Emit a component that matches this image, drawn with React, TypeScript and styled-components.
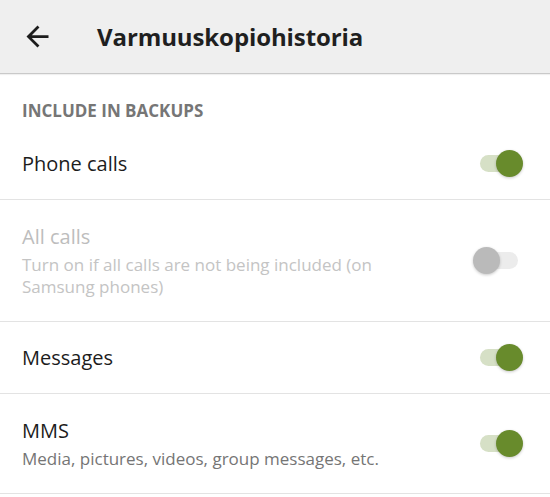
import React, { useState } from 'react';
import styled, { createGlobalStyle } from 'styled-components';

const GlobalStyle = createGlobalStyle`
  html, body {
    margin: 0;
    padding: 0;
    background: #ffffff;
  }
  body {
    font-family: 'Open Sans', 'Noto Sans', sans-serif;
    -webkit-font-smoothing: antialiased;
  }
`;

type Item = {
  id: string;
  title: string;
  subtitle?: string;
  disabled?: boolean;
  on: boolean;
};

const ITEMS: Item[] = [
  { id: 'calls', title: 'Phone calls', on: true },
  {
    id: 'allcalls',
    title: 'All calls',
    subtitle: 'Turn on if all calls are not being included (on Samsung phones)',
    disabled: true,
    on: false,
  },
  { id: 'messages', title: 'Messages', on: true },
  {
    id: 'mms',
    title: 'MMS',
    subtitle: 'Media, pictures, videos, group messages, etc.',
    on: true,
  },
];

const BackIcon = () => (
  <svg width="33" height="33" viewBox="0 0 24 24" fill="#1c1c1c">
    <path d="M20 11H7.83l5.59-5.59L12 4l-8 8 8 8 1.41-1.41L7.83 13H20v-2z" />
  </svg>
);

export default function App() {
  const [items, setItems] = useState(ITEMS);
  const toggle = (id: string) =>
    setItems((list) =>
      list.map((item) =>
        item.id === id && !item.disabled ? { ...item, on: !item.on } : item
      )
    );

  return (
    <>
      <GlobalStyle />
      <Screen>
        <Toolbar>
          <BackButton aria-label="back">
            <BackIcon />
          </BackButton>
          <Title>Varmuuskopiohistoria</Title>
        </Toolbar>
        <SectionHeader>Include in backups</SectionHeader>
        {items.map((item) => (
          <Row
            key={item.id}
            $tall={!!item.subtitle}
            onClick={() => toggle(item.id)}
          >
            <TextBlock>
              <RowTitle $disabled={item.disabled}>{item.title}</RowTitle>
              {item.subtitle && (
                <RowSubtitle $disabled={item.disabled}>
                  {item.subtitle}
                </RowSubtitle>
              )}
            </TextBlock>
            <Switch $on={item.on} $disabled={item.disabled}>
              <Knob $on={item.on} $disabled={item.disabled} />
            </Switch>
          </Row>
        ))}
      </Screen>
    </>
  );
}

const Screen = styled.div`
  width: 550px;
  min-height: 497px;
  background: #ffffff;
  overflow: hidden;
`;

const Toolbar = styled.header`
  height: 73px;
  display: flex;
  align-items: center;
  background: #efefef;
  border-bottom: 1px solid #c9c9c9;
  box-shadow: 0 1px 1px rgba(0, 0, 0, 0.06);
`;

const BackButton = styled.button`
  width: 33px;
  height: 33px;
  margin: 0 0 0 21px;
  padding: 0;
  border: 0;
  background: none;
  display: flex;
  align-items: center;
  justify-content: center;
`;

const Title = styled.h1`
  margin: 0 0 0 43px;
  font-size: 24px;
  font-weight: 700;
  color: #1f1f1f;
  letter-spacing: -0.1px;
`;

const SectionHeader = styled.div`
  padding: 26px 22px 6px;
  line-height: 22px;
  font-size: 17px;
  font-weight: 700;
  text-transform: uppercase;
  color: #767676;
`;

const Row = styled.div<{ $tall: boolean }>`
  box-sizing: border-box;
  min-height: 72px;
  padding: ${(p) => (p.$tall ? '23px' : '0')} 22px;
  display: flex;
  align-items: center;
  justify-content: space-between;
  border-bottom: 1px solid #e3e3e3;
`;

const TextBlock = styled.div`
  display: flex;
  flex-direction: column;
  max-width: 380px;
`;

const RowTitle = styled.div<{ $disabled?: boolean }>`
  font-size: 20px;
  line-height: 28px;
  color: ${(p) => (p.$disabled ? '#bdbdbd' : '#1c1c1c')};
`;

const RowSubtitle = styled.div<{ $disabled?: boolean }>`
  margin-top: 3px;
  font-size: 17px;
  line-height: 22px;
  color: ${(p) => (p.$disabled ? '#c4c4c4' : '#757575')};
`;

const Switch = styled.div<{ $on: boolean; $disabled?: boolean }>`
  position: relative;
  flex: none;
  width: 38px;
  height: 17px;
  margin-right: 10px;
  border-radius: 9px;
  background: ${(p) =>
    p.$disabled ? '#ececec' : p.$on ? '#d6e0c6' : '#d9d9d9'};
`;

const Knob = styled.div<{ $on: boolean; $disabled?: boolean }>`
  position: absolute;
  top: 50%;
  left: ${(p) => (p.$on ? '16px' : '-7px')};
  width: 27px;
  height: 27px;
  margin-top: -13.5px;
  border-radius: 50%;
  background: ${(p) =>
    p.$disabled ? '#bababa' : p.$on ? '#688b2c' : '#f1f1f1'};
  box-shadow: 0 1px 3px rgba(0, 0, 0, 0.22);
`;
